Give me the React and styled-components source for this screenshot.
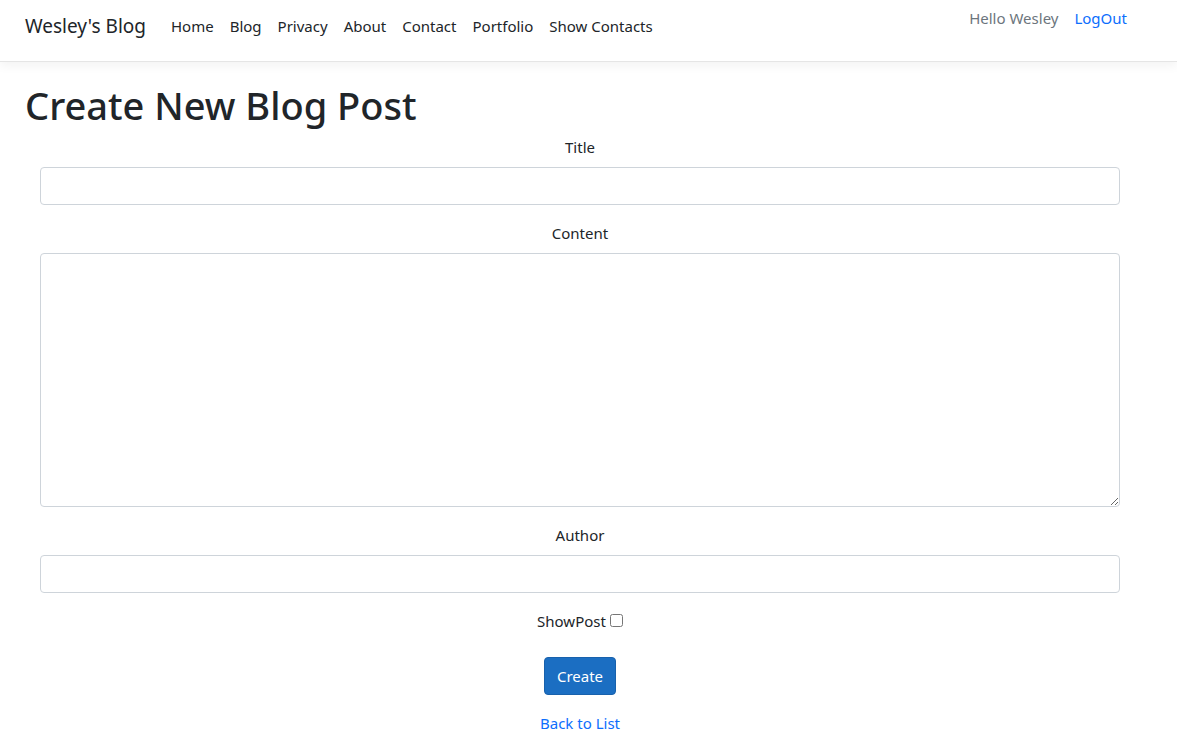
import styled, { createGlobalStyle } from "styled-components";

const GlobalStyle = createGlobalStyle`
  body {
    margin: 0;
    font-family: "Noto Sans", "Open Sans", sans-serif;
    font-size: 16px;
    color: #212529;
    background: #fff;
  }
  * { box-sizing: border-box; }
`;

const NavBar = styled.nav`
  height: 62px;
  display: flex;
  justify-content: space-between;
  padding: 0 50px 0 25px;
  border-bottom: 1px solid #e5e5e5;
  box-shadow: 0 4px 10px rgba(0, 0, 0, 0.05);
`;

const NavLeft = styled.div`
  display: flex;
  align-items: center;
  height: 52px;
`;

const Brand = styled.a`
  font-size: 19px;
  color: #212529;
  text-decoration: none;
  margin-right: 17px;
`;

const NavLink = styled.a`
  font-size: 15px;
  color: #212529;
  text-decoration: none;
  padding: 0 8px;
`;

const NavRight = styled.div`
  display: flex;
  align-items: center;
  height: 36px;
  gap: 16px;
`;

const Hello = styled.span`
  font-size: 15px;
  color: #6c757d;
`;

const LogOut = styled.a`
  font-size: 15px;
  color: #0d6efd;
  text-decoration: none;
`;

const Main = styled.main`
  padding: 0 57px 0 25px;
`;

const Heading = styled.h1`
  font-size: 38px;
  font-weight: 500;
  margin: 21px 0 0;
  line-height: 1.2;
`;

const Form = styled.form`
  display: flex;
  flex-direction: column;
  align-items: center;
  padding-left: 15px;
`;

const Label = styled.label`
  display: block;
  font-size: 15px;
  text-align: center;
  line-height: 24px;
  margin: ${(p) => p.$top || 0}px 0 8px;
`;

const Field = styled.div`
  width: 100%;
  margin-bottom: 16px;
`;

const Input = styled.input`
  display: block;
  width: 100%;
  height: 38px;
  border: 1px solid #ced4da;
  border-radius: 4px;
  padding: 6px 12px;
  font: inherit;
`;

const TextArea = styled.textarea`
  display: block;
  width: 100%;
  height: 254px;
  border: 1px solid #ced4da;
  border-radius: 4px;
  padding: 6px 12px;
  font: inherit;
  resize: vertical;
`;

const CheckRow = styled.div`
  display: flex;
  align-items: center;
  gap: 4px;
  font-size: 15px;
  margin-top: 2px;
`;

const Check = styled.input`
  width: 13px;
  height: 13px;
  margin: 0;
`;

const Button = styled.button`
  margin-top: 26px;
  height: 38px;
  width: 72px;
  background: #1b6ec2;
  border: 1px solid #1861ac;
  border-radius: 4px;
  color: #fff;
  font: inherit;
  font-size: 15px;
`;

const BackLink = styled.a`
  margin-top: 18px;
  font-size: 15px;
  color: #0d6efd;
  text-decoration: none;
`;

export default function App() {
  return (
    <>
      <GlobalStyle />
      <NavBar>
        <NavLeft>
          <Brand href="#">Wesley's Blog</Brand>
          <NavLink href="#">Home</NavLink>
          <NavLink href="#">Blog</NavLink>
          <NavLink href="#">Privacy</NavLink>
          <NavLink href="#">About</NavLink>
          <NavLink href="#">Contact</NavLink>
          <NavLink href="#">Portfolio</NavLink>
          <NavLink href="#">Show Contacts</NavLink>
        </NavLeft>
        <NavRight>
          <Hello>Hello Wesley</Hello>
          <LogOut href="#">LogOut</LogOut>
        </NavRight>
      </NavBar>
      <Main>
        <Heading>Create New Blog Post</Heading>
        <Form>
          <Field>
            <Label $top={6}>Title</Label>
            <Input type="text" />
          </Field>
          <Field>
            <Label>Content</Label>
            <TextArea />
          </Field>
          <Field>
            <Label>Author</Label>
            <Input type="text" />
          </Field>
          <CheckRow>
            <span>ShowPost</span>
            <Check type="checkbox" />
          </CheckRow>
          <Button type="button">Create</Button>
          <BackLink href="#">Back to List</BackLink>
        </Form>
      </Main>
    </>
  );
}
